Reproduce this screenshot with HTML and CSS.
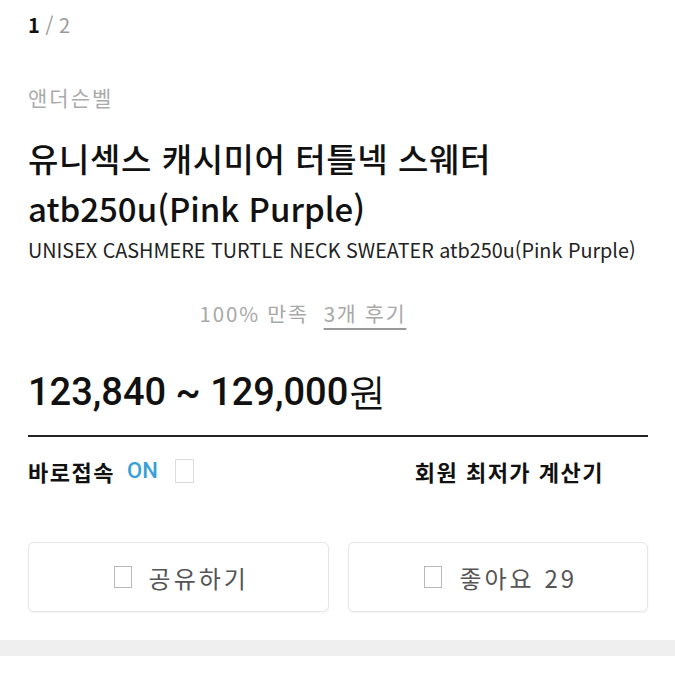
FILE: index.html
```html
<!DOCTYPE html>
<html lang="ko">
<head>
<meta charset="utf-8">
<link rel="stylesheet" href="styles.css">
</head>
<body>
<div class="page">
  <div class="counter"><b>1</b> <span class="slash">/ 2</span></div>
  <div class="brand">앤더슨벨</div>
  <h1 class="title"><span class="ko">유니섹스 캐시미어 터틀넥 스웨터</span><br>atb250u(Pink Purple)</h1>
  <div class="subtitle">UNISEX CASHMERE TURTLE NECK SWEATER atb250u(Pink Purple)</div>
  <div class="review"><span>100% 만족</span><span class="review-link">3개 후기</span></div>
  <div class="price">123,840 ~ 129,000원</div>
  <div class="options">
    <div class="direct">바로접속 <span class="on">ON</span> <span class="check"></span></div>
    <div class="calc">회원 최저가 계산기</div>
  </div>
  <div class="actions">
    <button class="btn"><span class="box"></span><span class="label">공유하기</span></button>
    <button class="btn"><span class="box"></span><span class="label">좋아요 29</span></button>
  </div>
</div>
<div class="band"></div>
</body>
</html>
```
FILE: styles.css
```css
* { box-sizing: border-box; }
html, body { margin: 0; padding: 0; background: #fff; }
body { font-family: "Noto Sans CJK KR", "Noto Sans", sans-serif; color: #111; }
.page { padding: 0 27px 0 28px; }
.counter { padding-top: 10px; height: 30px; font-size: 20px; line-height: 30px; color: #111; }
.counter b { font-weight: 700; }
.slash { color: #999; }
.brand { margin-top: 52px; font-size: 21px; line-height: 30px; color: #ababab; letter-spacing: 2px; }
.title { margin: 21px 0 0; font-size: 33px; line-height: 50px; font-weight: 500; color: #111; }
.title .ko { letter-spacing: 0.6px; }
.subtitle { margin-top: 3px; font-size: 19.8px; line-height: 28px; color: #222; }
.review { margin-top: 34px; font-size: 20.5px; line-height: 30px; color: #a8a8a8; display: flex; justify-content: center; gap: 15px; letter-spacing: 1.8px; padding-right: 70px; }
.review-link { text-decoration: underline; text-underline-offset: 6px; text-decoration-color: #9a9a9a; }
.price { margin-top: 41px; font-family: "Roboto", sans-serif; font-size: 38px; line-height: 46px; font-weight: 500; color: #111; }
.options { margin-top: 20px; border-top: 2px solid #222; display: flex; justify-content: space-between; align-items: center; padding: 19px 44px 0 0; }
.direct { font-size: 22px; font-weight: 700; line-height: 30px; display: flex; align-items: center; letter-spacing: 1.5px; }
.on { color: #3a9fd6; font-weight: 500; font-family: "Roboto", sans-serif; letter-spacing: 0; margin-left: 12px; font-size: 22px; }
.check { display: inline-block; width: 19px; height: 24px; border: 1px solid #dcdcdc; margin-left: 17px; }
.calc { font-size: 22px; font-weight: 700; line-height: 30px; letter-spacing: 1.5px; }
.actions { margin-top: 56px; display: flex; gap: 19px; }
.btn { flex: 1; height: 70px; background: #fff; border: 1px solid #e6e6e6; border-radius: 6px; font-family: inherit; font-size: 24px; color: #555; display: flex; align-items: center; justify-content: center; gap: 17px; padding: 0 0 0 6px; box-shadow: 0 1px 2px rgba(0,0,0,0.05); }
.label { letter-spacing: 3px; }
.box { display: inline-block; width: 18px; height: 22px; border: 1px solid #b8b8b8; }
.band { margin-top: 28px; height: 16px; background: #efefef; }
```
